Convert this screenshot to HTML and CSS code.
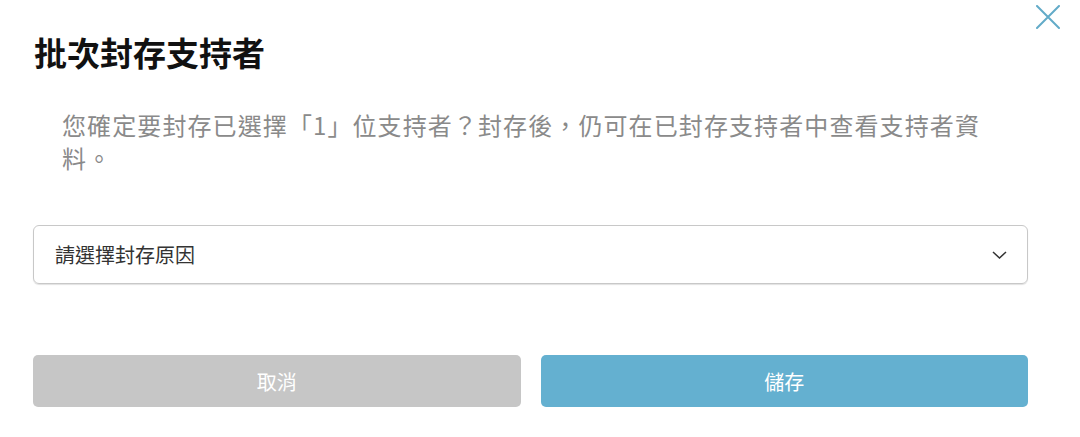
FILE: index.html
```html
<!DOCTYPE html>
<html lang="zh-Hant">
<head>
<meta charset="utf-8">
<link rel="stylesheet" href="styles.css">
</head>
<body>
<div class="dialog">
  <button class="close" aria-label="close">
    <svg width="24" height="24" viewBox="0 0 24 24"><path d="M1 1 L23 23 M23 1 L1 23" stroke="#62abc8" stroke-width="2" fill="none" stroke-linecap="round"/></svg>
  </button>
  <h1 class="title">批次封存支持者</h1>
  <p class="message">您確定要封存已選擇「1」位支持者？封存後，仍可在已封存支持者中查看支持者資料。</p>
  <div class="select">
    <span class="select-text">請選擇封存原因</span>
    <svg class="chevron" width="15" height="8" viewBox="0 0 15 8"><path d="M1 1 L7.5 7 L14 1" stroke="#333" stroke-width="1.5" fill="none"/></svg>
  </div>
  <div class="actions">
    <button class="btn btn-cancel">取消</button>
    <button class="btn btn-save">儲存</button>
  </div>
</div>
</body>
</html>
```
FILE: styles.css
```css
html, body {
  margin: 0;
  padding: 0;
  background: #fff;
}
body {
  font-family: "Noto Sans CJK TC", "Noto Sans", sans-serif;
  width: 1080px;
  height: 437px;
  overflow: hidden;
}
.dialog {
  position: relative;
  padding: 31px 52px 0 33px;
}
.close {
  position: absolute;
  top: 4px;
  right: 19px;
  width: 26px;
  height: 26px;
  padding: 1px;
  border: none;
  background: none;
}
.title {
  margin: 0 0 0 1px;
  font-size: 33px;
  line-height: 42px;
  font-weight: 700;
  color: #111;
}
.message {
  margin: 35px 0 0 0;
  padding: 0 30px 0 29px;
  font-size: 24px;
  line-height: 33px;
  letter-spacing: 1.1px;
  color: #8a8a8a;
}
.select {
  margin-top: 51px;
  height: 59px;
  border: 1px solid #c8c8c8;
  border-radius: 6px;
  box-shadow: 0 1px 1px rgba(0, 0, 0, 0.12);
  display: flex;
  align-items: center;
  justify-content: space-between;
  padding: 0 20px 0 21px;
  box-sizing: border-box;
}
.select-text {
  font-size: 20px;
  color: #333;
}
.actions {
  margin-top: 71px;
  display: grid;
  grid-template-columns: 1fr 1fr;
  column-gap: 20px;
}
.btn {
  height: 52px;
  border: none;
  border-radius: 5px;
  font-family: inherit;
  font-size: 20px;
  color: #fff;
}
.btn-cancel {
  background: #c6c6c6;
}
.btn-save {
  background: #64b0d0;
}
```
